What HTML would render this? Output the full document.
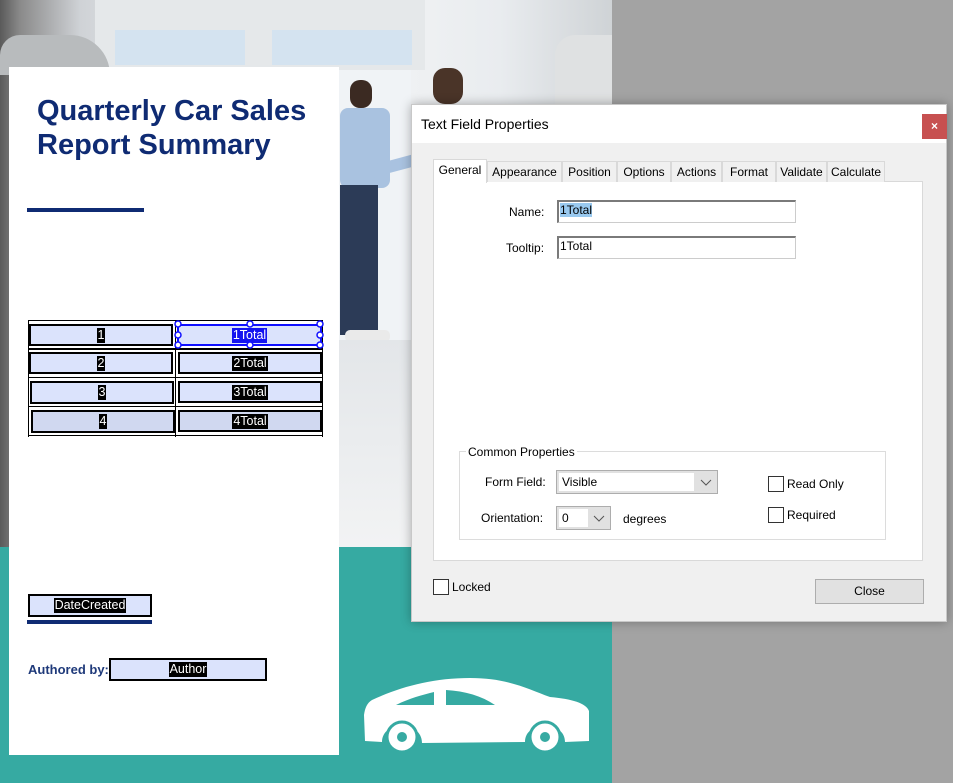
<!DOCTYPE html>
<html><head><meta charset="utf-8"><style>
*{box-sizing:border-box;margin:0;padding:0}
body{width:953px;height:783px;position:relative;overflow:hidden;background:#a3a3a3;font-family:"Liberation Sans",sans-serif}
.abs{position:absolute}
.ui{font-family:"Liberation Sans",sans-serif;font-size:12px;color:#000}
.fld{position:absolute;background:#dbe3fc;border:2px solid #000;display:flex;align-items:center;justify-content:center}
.fld span{background:#000;color:#fff;font-size:12.5px;line-height:15px;padding:0 1px}
.tab{position:absolute;top:161px;height:21px;border:1px solid #d9d9d9;border-bottom:none;background:#f0f0f0;font-size:12px;text-align:center;line-height:20px}
.inp{position:absolute;background:#fff;border:1px solid #ccc;border-top:2px solid #7a7a7a;border-left:2px solid #7a7a7a;font-size:12px;padding-left:1px;line-height:17px}
.cb{position:absolute;width:16px;height:16px;border:1px solid #333;background:#fff}
.sel{position:absolute;border:1px solid #adadad;background:#e1e1e1}
.sel .w{position:absolute;left:2px;top:2px;bottom:2px;background:#fff;padding-left:3px;font-size:12px;line-height:18px}
</style></head><body>
<div class="abs" style="left:0;top:0;width:612px;height:547px;background:linear-gradient(90deg,#5a5a5a 0,#8a8a8a 20px,#cfd2d6 80px,#eef0f2 200px,#f4f5f6 340px,#e9ecef 500px,#cfd3d6 612px)"></div>
<div class="abs" style="left:95px;top:0;width:330px;height:70px;background:#e5e8ea"></div>
<div class="abs" style="left:115px;top:30px;width:130px;height:35px;background:#d4e3f0"></div>
<div class="abs" style="left:272px;top:30px;width:140px;height:35px;background:#d4e3f0"></div>
<div class="abs" style="left:0;top:35px;width:110px;height:40px;background:#b8bbbd;border-radius:20px 40px 0 0"></div>
<div class="abs" style="left:339px;top:70px;width:72px;height:270px;background:#f0f3f6"></div>
<div class="abs" style="left:350px;top:80px;width:22px;height:28px;background:#3b2a22;border-radius:10px"></div>
<div class="abs" style="left:340px;top:108px;width:50px;height:80px;background:#a9c2e0;border-radius:8px"></div>
<div class="abs" style="left:370px;top:160px;width:45px;height:12px;background:#a9c2e0;transform:rotate(-15deg)"></div>
<div class="abs" style="left:340px;top:185px;width:38px;height:150px;background:#2c3b57"></div>
<div class="abs" style="left:345px;top:330px;width:45px;height:12px;background:#eaeaea;border-radius:5px"></div>
<div class="abs" style="left:433px;top:68px;width:30px;height:36px;background:#4a3428;border-radius:12px"></div>
<div class="abs" style="left:555px;top:35px;width:57px;height:70px;background:#dfe1e2;border-radius:20px 0 0 0"></div>
<div class="abs" style="left:339px;top:340px;width:72px;height:207px;background:linear-gradient(180deg,#e3e6e9,#f2f3f4)"></div>
<div class="abs" style="left:0;top:547px;width:612px;height:236px;background:#36aaa2"></div>
<svg class="abs" style="left:360px;top:675px" width="235" height="85" viewBox="0 0 235 85">
<path fill="#fff" d="M12 25 C40 12 72 3 110 3 C148 3 168 14 190 22 C212 24 226 28 229 36 L229 66 L205 67 C205 45 165 45 165 67 L62 68 C62 45 22 45 22 67 L5 66 L4 40 C5 33 7 28 12 25Z"/>
<path fill="#36aaa2" d="M36 30 C50 23 62 20 74 17 L74 30Z M86 15 L86 30 L135 30 C122 21 105 16 86 15Z"/>
<circle cx="42" cy="62" r="15" fill="#fff" stroke="#36aaa2" stroke-width="3"/><circle cx="42" cy="62" r="5" fill="#36aaa2"/>
<circle cx="185" cy="62" r="15" fill="#fff" stroke="#36aaa2" stroke-width="3"/><circle cx="185" cy="62" r="5" fill="#36aaa2"/>
</svg>
<div class="abs" style="left:9px;top:67px;width:330px;height:688px;background:#fff"></div>
<div class="abs" style="left:37px;top:94px;font-size:29px;font-weight:bold;color:#0f2b73;line-height:34px">Quarterly Car Sales<br>Report Summary</div>
<div class="abs" style="left:27px;top:208px;width:117px;height:4px;background:#0f2b73"></div>
<div class="abs" style="left:28px;top:320px;width:295px;height:117px;border-left:1px solid #000;border-right:1px solid #000;border-top:1px solid #000"></div>
<div class="abs" style="left:175px;top:320px;width:1px;height:117px;background:#000"></div>
<div class="abs" style="left:28px;top:348px;width:295px;height:2px;border-top:1px solid #000;border-bottom:1px solid #000"></div>
<div class="abs" style="left:28px;top:377px;width:295px;height:1px;background:#000"></div>
<div class="abs" style="left:28px;top:406px;width:295px;height:1px;background:#000"></div>
<div class="abs" style="left:28px;top:435px;width:295px;height:1px;background:#000"></div>
<div class="fld" style="left:29px;top:324px;width:144px;height:22px"><span>1</span></div>
<div class="fld" style="left:29px;top:352px;width:144px;height:22px"><span>2</span></div>
<div class="fld" style="left:30px;top:381px;width:144px;height:23px"><span>3</span></div>
<div class="fld" style="left:31px;top:410px;width:144px;height:23px;background:#d0d8f0"><span>4</span></div>
<div class="fld" style="left:177px;top:324px;width:145px;height:22px;border-color:#1010ff"><span style="background:#1414f0">1Total</span></div>
<div class="fld" style="left:178px;top:352px;width:144px;height:22px"><span>2Total</span></div>
<div class="fld" style="left:178px;top:381px;width:144px;height:22px"><span>3Total</span></div>
<div class="fld" style="left:178px;top:410px;width:144px;height:22px;background:#d0d8f0"><span>4Total</span></div>
<svg class="abs" style="left:172px;top:320px" width="156" height="32"><g fill="#fff" stroke="#1010ff" stroke-width="1.5"><circle cx="6" cy="4" r="3"/><circle cx="78" cy="4" r="3"/><circle cx="148" cy="4" r="3"/><circle cx="6" cy="15" r="3"/><circle cx="148" cy="15" r="3"/><circle cx="6" cy="25" r="3"/><circle cx="78" cy="25" r="3"/><circle cx="148" cy="25" r="3"/></g></svg>
<div class="fld" style="left:28px;top:594px;width:124px;height:23px"><span>DateCreated</span></div>
<div class="abs" style="left:27px;top:620px;width:125px;height:4px;background:#0f2b73"></div>
<div class="abs" style="left:28px;top:662px;font-size:13px;font-weight:bold;color:#1f3a7a">Authored by:</div>
<div class="fld" style="left:109px;top:658px;width:158px;height:23px"><span>Author</span></div>
<div class="abs ui" style="left:411px;top:104px;width:536px;height:518px;background:#f0f0f0;border:1px solid #c8c8c8;box-shadow:0 0 10px rgba(0,0,0,.3)">
<div class="abs" style="left:0;top:0;width:534px;height:38px;background:#fff"></div>
<div class="abs" style="left:9px;top:11px;font-size:14px">Text Field Properties</div>
<div class="abs" style="left:510px;top:9px;width:25px;height:25px;background:#c75050;color:#fff;text-align:center;line-height:24px;font-size:12px;font-weight:bold">×</div>
</div>
<div class="abs" style="left:433px;top:181px;width:490px;height:380px;background:#fff;border:1px solid #d9d9d9"></div>
<div class="tab" style="left:433px;top:159px;width:54px;height:24px;background:#fff;line-height:21px">General</div>
<div class="tab" style="left:487px;width:75px">Appearance</div>
<div class="tab" style="left:562px;width:55px">Position</div>
<div class="tab" style="left:617px;width:54px">Options</div>
<div class="tab" style="left:671px;width:51px">Actions</div>
<div class="tab" style="left:722px;width:54px">Format</div>
<div class="tab" style="left:776px;width:51px">Validate</div>
<div class="tab" style="left:827px;width:58px">Calculate</div>
<div class="abs ui" style="left:509px;top:205px">Name:</div>
<div class="inp" style="left:557px;top:200px;width:239px;height:23px"><span style="background:#99c9ef">1Total</span></div>
<div class="abs ui" style="left:506px;top:241px">Tooltip:</div>
<div class="inp" style="left:557px;top:236px;width:239px;height:23px">1Total</div>
<div class="abs" style="left:459px;top:451px;width:427px;height:89px;border:1px solid #dcdcdc"></div>
<div class="abs ui" style="left:466px;top:445px;background:#fff;padding:0 2px">Common Properties</div>
<div class="abs ui" style="left:485px;top:475px">Form Field:</div>
<div class="sel" style="left:556px;top:470px;width:162px;height:24px"><div class="w" style="width:135px">Visible</div><svg class="abs" style="left:143px;top:8px" width="12" height="8"><path d="M1 1 L6 6 L11 1" fill="none" stroke="#555"/></svg></div>
<div class="abs ui" style="left:481px;top:511px">Orientation:</div>
<div class="sel" style="left:556px;top:506px;width:55px;height:24px"><div class="w" style="width:29px">0</div><svg class="abs" style="left:36px;top:8px" width="12" height="8"><path d="M1 1 L6 6 L11 1" fill="none" stroke="#555"/></svg></div>
<div class="abs ui" style="left:623px;top:512px">degrees</div>
<div class="cb" style="left:768px;top:476px"></div><div class="abs ui" style="left:787px;top:477px">Read Only</div>
<div class="cb" style="left:768px;top:507px"></div><div class="abs ui" style="left:787px;top:508px">Required</div>
<div class="cb" style="left:433px;top:579px"></div><div class="abs ui" style="left:452px;top:580px">Locked</div>
<div class="abs ui" style="left:815px;top:579px;width:109px;height:25px;background:#e1e1e1;border:1px solid #adadad;text-align:center;line-height:23px">Close</div>
</body></html>
